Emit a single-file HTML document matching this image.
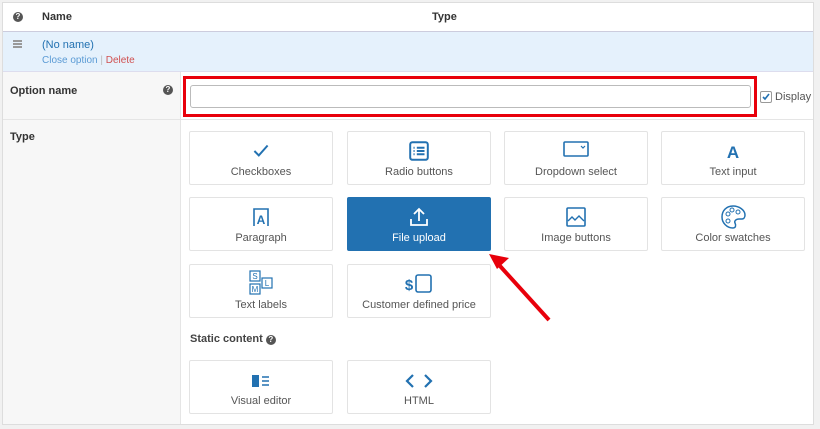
<!DOCTYPE html>
<html><head><meta charset="utf-8"><style>
*{box-sizing:border-box;margin:0;padding:0}
body{width:820px;height:429px;background:#f1f1f1;font-family:"Liberation Sans",sans-serif;position:relative;overflow:hidden;font-size:11px;color:#333}
.a{position:absolute}
.card{position:absolute;width:144px;height:54px;background:#fff;border:1px solid #e3e3e3;border-radius:2px;text-align:center;color:#555;font-size:11px}
.card svg{position:absolute;left:50%;top:8px;transform:translateX(-50%)}
.card span{position:absolute;left:0;right:0;top:34px}
.q{display:inline-block;width:10px;height:10px;border-radius:50%;background:#555;color:#fff;font-size:8px;line-height:10px;text-align:center;font-weight:bold}
</style></head><body>
<div class="a" style="left:2px;top:2px;width:812px;height:423px;background:#fff;border:1px solid #ddd"></div>
<div class="a" style="left:3px;top:3px;width:810px;height:29px;background:#fff;border-bottom:1px solid #ccd"></div>
<div class="a q" style="left:13px;top:12px">?</div>
<div class="a" style="left:42px;top:11px;font-weight:bold;color:#333">Name</div>
<div class="a" style="left:432px;top:11px;font-weight:bold;color:#333">Type</div>
<div class="a" style="left:3px;top:32px;width:810px;height:40px;background:#e5f1fc;border-bottom:1px solid #dde"></div>
<div class="a" style="left:13px;top:40px;width:9px;height:2px;background:#999;box-shadow:0 3px #999,0 6px #999"></div>
<div class="a" style="left:42px;top:39px;color:#2271b1">(No name)</div>
<div class="a" style="left:42px;top:55px;font-size:10px;color:#5b9bd5">Close option <span style="color:#bbb">|</span> <span style="color:#d05050">Delete</span></div>
<div class="a" style="left:3px;top:72px;width:178px;height:352px;background:#f7f7f7;border-right:1px solid #e5e5e5"></div>
<div class="a" style="left:3px;top:119px;width:810px;height:1px;background:#e5e5e5"></div>
<div class="a" style="left:10px;top:85px;font-weight:bold">Option name</div>
<div class="a q" style="left:163px;top:85px">?</div>
<div class="a" style="left:10px;top:131px;font-weight:bold">Type</div>
<div class="a" style="left:183px;top:76px;width:574px;height:41px;border:3px solid #e8000b"></div>
<div class="a" style="left:190px;top:85px;width:561px;height:23px;border:1px solid #bbb;border-radius:3px;background:#fff"></div>
<div class="a" style="left:760px;top:91px;width:12px;height:12px;border:1px solid #999;border-radius:2px;background:#fff"><svg width="10" height="10" viewBox="0 0 10 10" style="position:absolute;left:0;top:0"><path d="M2 5l2 2 4-5" stroke="#2271b1" stroke-width="1.6" fill="none"/></svg></div>
<div class="a" style="left:775px;top:91px;color:#555;font-size:11px">Display</div>

<div class="card" style="left:189px;top:131px"><svg width="22" height="22" viewBox="0 0 20 20"><path d="M4 10l4 4 8-9" stroke="#2271b1" stroke-width="1.8" fill="none"/></svg><span>Checkboxes</span></div>
<div class="card" style="left:347px;top:131px"><svg width="22" height="22" viewBox="0 0 20 20"><rect x="2" y="2" width="16" height="16" rx="2" stroke="#2271b1" stroke-width="1.8" fill="none"/><path d="M5 7h1M8 7h7M5 10h1M8 10h7M5 13h1M8 13h7" stroke="#2271b1" stroke-width="1.8"/></svg><span>Radio buttons</span></div>
<div class="card" style="left:504px;top:131px"><svg width="26" height="18" viewBox="0 0 26 18"><rect x="1" y="2" width="24" height="14" rx="1" stroke="#2271b1" stroke-width="1.6" fill="none"/><path d="M18 6l2 2 2-2" stroke="#2271b1" stroke-width="1.2" fill="none"/></svg><span>Dropdown select</span></div>
<div class="card" style="left:661px;top:131px"><svg width="20" height="22" viewBox="0 0 20 22"><text x="10" y="18" text-anchor="middle" font-family="Liberation Sans" font-weight="bold" font-size="17" fill="#2271b1">A</text></svg><span>Text input</span></div>

<div class="card" style="left:189px;top:197px"><svg width="20" height="22" viewBox="0 0 20 22"><path d="M3 20V3h14v17" stroke="#2271b1" stroke-width="1.6" fill="none"/><text x="10" y="18" text-anchor="middle" font-family="Liberation Sans" font-weight="bold" font-size="12" fill="#2271b1">A</text></svg><span>Paragraph</span></div>
<div class="card" style="left:347px;top:197px;background:#2271b1;border-color:#2271b1;color:#fff"><svg width="22" height="22" viewBox="0 0 22 22"><path d="M11 15V3M6 8l5-5 5 5M3 13v6h16v-6" stroke="#fff" stroke-width="1.8" fill="none"/></svg><span>File upload</span></div>
<div class="card" style="left:504px;top:197px"><svg width="22" height="22" viewBox="0 0 22 22"><rect x="2" y="2" width="18" height="18" rx="1" stroke="#2271b1" stroke-width="1.6" fill="none"/><path d="M3 15l4-4 3 3 4-4 5 5" stroke="#2271b1" stroke-width="1.4" fill="none"/></svg><span>Image buttons</span></div>
<div class="card" style="left:661px;top:197px"><svg width="26" height="26" viewBox="0 0 26 26" style="top:6px"><path d="M13 2C6 2 2 7 2 13s5 11 11 11c3 0 3-3 2-5s1-4 4-4h3c2 0 3-2 3-4C25 6 19 2 13 2z" stroke="#2271b1" stroke-width="1.5" fill="none"/><circle cx="8" cy="10" r="2" stroke="#2271b1" fill="none"/><circle cx="12" cy="6" r="2" stroke="#2271b1" fill="none"/><circle cx="18" cy="8" r="2" stroke="#2271b1" fill="none"/><circle cx="8" cy="17" r="2" stroke="#2271b1" fill="none"/></svg><span>Color swatches</span></div>

<div class="card" style="left:189px;top:264px"><svg width="26" height="26" viewBox="0 0 26 26" style="top:4px"><g stroke="#2271b1" fill="none" stroke-width="1.2"><rect x="2" y="2" width="10" height="10"/><rect x="2" y="15" width="10" height="10"/><rect x="14" y="9" width="10" height="10"/></g><g font-family="Liberation Sans" font-size="8" fill="#2271b1" text-anchor="middle"><text x="7" y="10">S</text><text x="7" y="23">M</text><text x="19" y="17">L</text></g></svg><span>Text labels</span></div>
<div class="card" style="left:347px;top:264px"><svg width="30" height="22" viewBox="0 0 30 22"><text x="5" y="17" text-anchor="middle" font-family="Liberation Sans" font-weight="bold" font-size="15" fill="#2271b1">$</text><rect x="12" y="2" width="15" height="17" rx="2" stroke="#2271b1" stroke-width="1.6" fill="none"/></svg><span>Customer defined price</span></div>

<div class="a" style="left:190px;top:333px;font-weight:bold;color:#444">Static content <span class="q">?</span></div>
<div class="card" style="left:189px;top:360px"><svg width="22" height="16" viewBox="0 0 22 16" style="top:12px"><rect x="2" y="2" width="7" height="12" fill="#2271b1"/><path d="M12 4h7M12 8h7M12 12h7" stroke="#2271b1" stroke-width="1.5"/></svg><span>Visual editor</span></div>
<div class="card" style="left:347px;top:360px"><svg width="30" height="16" viewBox="0 0 30 16" style="top:12px"><path d="M9 2L3 8l6 6M21 2l6 6-6 6" stroke="#2271b1" stroke-width="2.2" fill="none"/></svg><span>HTML</span></div>

<svg class="a" style="left:0;top:0" width="820" height="429"><line x1="549" y1="320" x2="500" y2="266" stroke="#e8000b" stroke-width="4"/><path d="M489 254l20 4-12 11z" fill="#e8000b"/></svg>
</body></html>
